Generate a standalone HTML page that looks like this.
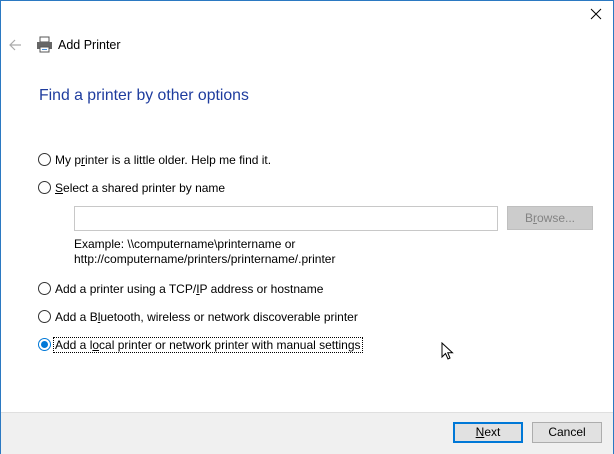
<!DOCTYPE html>
<html><head><meta charset="utf-8"><style>
*{margin:0;padding:0;box-sizing:border-box}
body{width:614px;height:454px;overflow:hidden;background:#fff;font-family:"Liberation Sans",sans-serif;font-size:12px;color:#000;position:relative}
.win{position:absolute;left:0;top:0;width:614px;height:454px;border:1px solid #2b79c2;border-bottom:none}
.abs{position:absolute;white-space:nowrap}
.radio{position:absolute;width:13px;height:13px;border:1px solid #333;border-radius:50%;background:#fff}
.radio.on{border-color:#0078d7}
.radio.on::after{content:"";position:absolute;left:2px;top:2px;width:7px;height:7px;border-radius:50%;background:#0078d7}
.footer{position:absolute;left:1px;top:412px;width:612px;height:42px;background:#f0f0f0;border-top:1px solid #dfdfdf}
.btn{position:absolute;height:21px;border:1px solid #adadad;background:#e1e1e1;text-align:center;line-height:19px;font-size:12px}
</style></head><body>
<div class="win"></div>
<svg class="abs" style="left:590px;top:8px" width="12" height="12"><path d="M1 1L11 11M11 1L1 11" stroke="#000" stroke-width="1"/></svg>
<svg class="abs" style="left:9px;top:39px" width="13" height="12"><path d="M1 6H12M6 1L1 6L6 11" stroke="#aaa" stroke-width="1.2" fill="none"/></svg>
<svg class="abs" style="left:36px;top:36px" width="17" height="17">
<rect x="4" y="1" width="9" height="5" fill="#fff" stroke="#555"/>
<rect x="1" y="6" width="15" height="7" fill="#666"/>
<rect x="4" y="11" width="9" height="5" fill="#fff" stroke="#555"/>
<rect x="6" y="13" width="5" height="1" fill="#4a8fd6"/>
</svg>
<div class="abs" style="left:58px;top:38px;font-size:12.5px">Add Printer</div>
<div class="abs" style="left:39px;top:87px;font-size:15.8px;color:#1e3c9e">Find a printer by other options</div>

<div class="radio" style="left:38px;top:153px"></div>
<div class="abs" style="left:55px;top:153px">My p<u>r</u>inter is a little older. Help me find it.</div>
<div class="radio" style="left:38px;top:181px"></div>
<div class="abs" style="left:55px;top:181px"><u>S</u>elect a shared printer by name</div>
<div class="abs" style="left:74px;top:206px;width:424px;height:25px;border:1px solid #c8c8c8"></div>
<div class="abs" style="left:507px;top:206px;width:86px;height:24px;background:#cccccc;border:1px solid #bfbfbf;color:#838383;text-align:center;line-height:22px">B<u>r</u>owse...</div>
<div class="abs" style="left:74px;top:237px;line-height:15px">Example: \\computername\printername or<br>http://computername/printers/printername/.printer</div>
<div class="radio" style="left:38px;top:282px"></div>
<div class="abs" style="left:55px;top:282px">Add a printer using a TCP/<u>I</u>P address or hostname</div>
<div class="radio" style="left:38px;top:310px"></div>
<div class="abs" style="left:55px;top:310px">Add a B<u>l</u>uetooth, wireless or network discoverable printer</div>
<div class="radio on" style="left:38px;top:338px"></div>
<div class="abs" style="left:53px;top:337px;border:1px dotted #000;padding:0 1px;line-height:14px">Add a l<u>o</u>cal printer or network printer with manual settings</div>
<svg class="abs" style="left:441px;top:342px" width="14" height="20"><path d="M1 1V15L4.5 11.5L7 17L9 16L6.8 10.8H11.5Z" fill="#fff" stroke="#000" stroke-width="1"/></svg>

<div class="footer"></div>
<div class="btn" style="left:453px;top:422px;width:70px;border:2px solid #0078d7;line-height:17px"><u>N</u>ext</div>
<div class="btn" style="left:532px;top:422px;width:70px">Cancel</div>
</body></html>
